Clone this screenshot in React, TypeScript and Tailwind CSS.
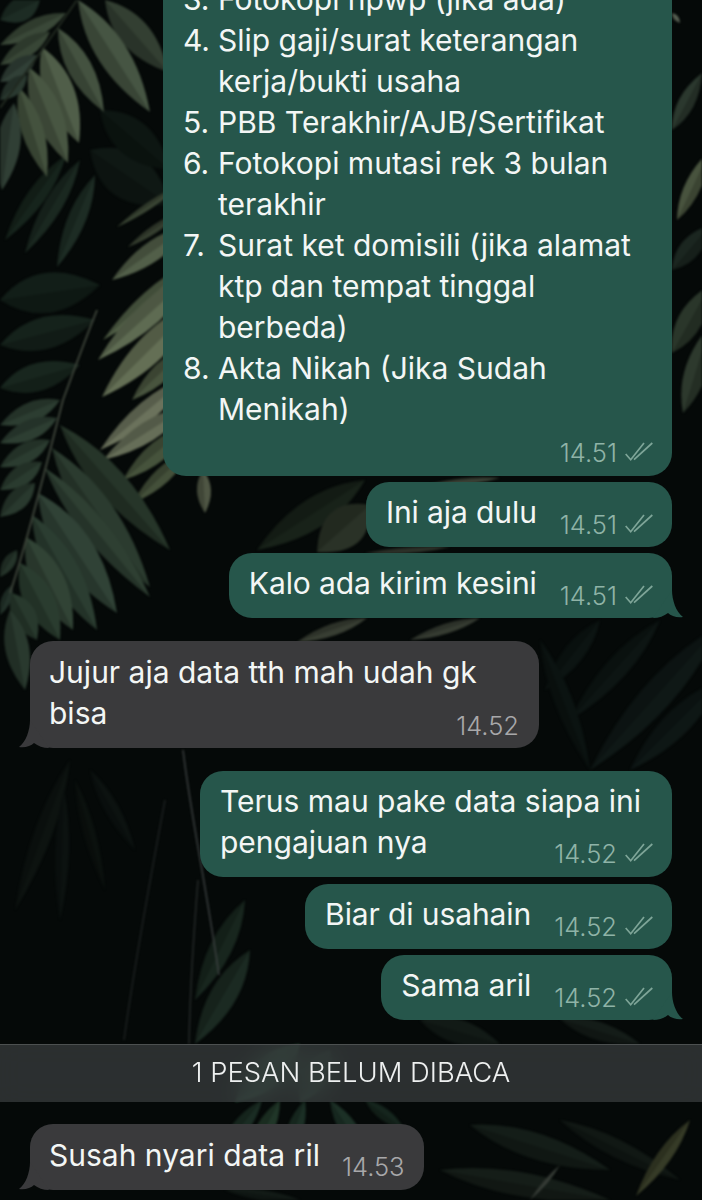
type LeafData = [number, number, number, number, number, string];

const leaves: LeafData[] = [
  // far dark fronds first
  [95, 175, 57, 267, 18, "#1d2c24"],
  [80, 160, 25, 253, 18, "#1a2820"],
  [66, 155, 5, 240, 18, "#16241c"],
  [90, 150, 170, 205, 46, "#0f1814"],
  [100, 110, 170, 170, 36, "#0d1612"],
  [0, 300, 100, 285, 40, "#121e18"],
  [0, 345, 95, 320, 32, "#15221b"],
  [0, 388, 80, 365, 28, "#18261e"],
  [180, 185, 117, 227, 7, "#3a4534"],
  [180, 212, 128, 247, 8, "#363f30"],
  // top left frond
  [105, 0, 168, 72, 30, "#333f32"],
  [78, 0, 150, 112, 30, "#465543"],
  [58, 28, 104, 112, 24, "#445240"],
  [42, 47, 79, 143, 30, "#505e49"],
  [29, 67, 68, 163, 28, "#485642"],
  [19, 87, 47, 177, 22, "#44523e"],
  [14, 103, 2, 190, 24, "#303f35"],
  [66, 13, 0, 45, 18, "#3a4838"],
  [50, 32, 0, 65, 18, "#384636"],
  [37, 55, 0, 82, 18, "#314037"],
  [27, 75, 0, 100, 16, "#2a3930"],
  [40, 0, 0, 20, 24, "#1d2c24"],
  // palm behind first bubble
  [190, 225, 112, 280, 20, "#525f49"],
  [190, 262, 103, 340, 15, "#505e46"],
  [200, 268, 98, 360, 24, "#5e6b52"],
  [200, 300, 102, 397, 28, "#646f55"],
  [190, 345, 132, 400, 18, "#48543e"],
  [190, 375, 100, 450, 20, "#6b725c"],
  [190, 405, 103, 460, 20, "#666e58"],
  [190, 425, 123, 480, 20, "#46533c"],
  [190, 450, 133, 503, 16, "#44503a"],
  [203, 470, 205, 513, 14, "#4f5644"],
  // middle left frond
  [60, 400, 0, 425, 20, "#2c3d31"],
  [57, 418, 0, 443, 20, "#2d3e32"],
  [50, 440, 0, 467, 20, "#2b3c30"],
  [42, 462, 0, 490, 20, "#2a3b2f"],
  [35, 483, 0, 517, 20, "#29392e"],
  [17, 550, 0, 577, 12, "#25342a"],
  [12, 585, 0, 615, 10, "#23322a"],
  [60, 425, 170, 550, 30, "#263529"],
  [52, 448, 150, 587, 32, "#2b3b2f"],
  [45, 468, 150, 597, 24, "#2e3f32"],
  [38, 493, 117, 613, 36, "#304236"],
  [32, 515, 97, 630, 30, "#2b3d31"],
  [26, 537, 73, 630, 32, "#314335"],
  [20, 563, 60, 640, 30, "#2a3c2f"],
  [12, 593, 37, 640, 24, "#28392d"],
  [10, 610, 25, 690, 24, "#29392e"],
  // right edge
  [672, 13, 680, 23, 5, "#5d6658"],
  [672, 130, 702, 73, 16, "#2b382e"],
  [677, 220, 710, 150, 16, "#48533e"],
  [672, 270, 710, 225, 20, "#1b2620"],
  [672, 353, 710, 285, 24, "#2a362a"],
  [683, 413, 710, 325, 22, "#2d392d"],
  // behind the short bubbles
  [365, 480, 257, 550, 30, "#182219"],
  [370, 505, 317, 552, 40, "#2a3227"],
  [367, 618, 297, 642, 12, "#383e33"],
  [480, 618, 410, 640, 10, "#363c32"],
  [500, 478, 430, 484, 6, "#3d4438"],
  [450, 547, 365, 553, 6, "#2f342b"],
  // dim fronds right of grey bubble
  [720, 625, 590, 770, 30, "#0f1816"],
  [720, 680, 630, 770, 26, "#0e1715"],
  [660, 620, 570, 720, 22, "#0d1513"],
  [600, 620, 545, 690, 20, "#0c1412"],
  [540, 640, 590, 770, 18, "#0b1311"],
  // lower left, barely visible
  [70, 760, 15, 910, 18, "#0d1310"],
  [64, 790, 60, 920, 14, "#0c1210"],
  [90, 770, 135, 850, 14, "#0c1210"],
  [75, 780, 105, 890, 12, "#0b110e"],
  [245, 900, 195, 1000, 22, "#18261e"],
  [250, 950, 195, 1044, 26, "#1b2a22"],
  // band under the unread divider and bottom
  [420, 1020, 500, 1044, 24, "#121a16"],
  [560, 1019, 640, 1044, 18, "#141c18"],
  [300, 1044, 235, 1102, 30, "#2e5a40"],
  [330, 1050, 300, 1102, 26, "#2a5039"],
  [262, 1100, 216, 1158, 16, "#1a2c23"],
  [280, 1100, 245, 1168, 18, "#203628"],
  [305, 1100, 283, 1165, 16, "#1b2f25"],
  [330, 1100, 372, 1165, 18, "#1c3026"],
  [365, 1100, 405, 1130, 12, "#15251d"],
  [470, 1125, 610, 1170, 26, "#141d18"],
  [440, 1170, 610, 1200, 24, "#151d18"],
  [560, 1120, 680, 1180, 18, "#111814"],
  [690, 1120, 636, 1196, 14, "#363b27"],
  [560, 1165, 530, 1200, 4, "#3a403a"],
  [225, 1190, 300, 1200, 10, "#121a16"],
];

const control = ([x1, y1, x2, y2, w]: LeafData, sign: number) => {
  const dx = x2 - x1;
  const dy = y2 - y1;
  const len = Math.hypot(dx, dy) || 1;
  return `${x1 + dx * 0.45 + (-dy / len) * w * sign} ${y1 + dy * 0.45 + (dx / len) * w * sign}`;
};

const leafPath = (l: LeafData) =>
  `M${l[0]} ${l[1]} Q${control(l, 1)} ${l[2]} ${l[3]} Q${control(l, -1)} ${l[0]} ${l[1]}Z`;

// darker half of the leaf, gives the fold along the midrib
const shadePath = (l: LeafData) => `M${l[0]} ${l[1]} Q${control(l, 1)} ${l[2]} ${l[3]}Z`;

const Backdrop = () => (
  <svg className="absolute inset-0 blur-[1px]" width="702" height="1200" viewBox="0 0 702 1200" fill="none">
    {leaves.map((l, i) => (
      <g key={i}>
        <path d={leafPath(l)} fill={l[5]} />
        <path d={shadePath(l)} fill="#000000" fillOpacity="0.18" />
      </g>
    ))}
    {/* stems */}
    <path d="M77 0 C60 25 35 60 0 108" stroke="#20281f" strokeWidth="2" />
    <path d="M97 310 C85 340 74 370 63 400 C45 470 28 540 10 593" stroke="#3b4238" strokeWidth="2" />
    <path d="M183 750 C190 810 205 880 219 975" stroke="#3c4040" strokeWidth="1.5" />
    <path d="M165 800 C150 880 135 960 124 1040" stroke="#1d2120" strokeWidth="1.5" />
    <path d="M198 880 C194 930 190 990 189 1044" stroke="#262a29" strokeWidth="1.5" />
  </svg>
);

const Ticks = () => (
  <svg className="ml-[7px] w-[30px] h-[20px]" viewBox="0 0 30 20" fill="none" stroke="#7ea598" strokeWidth="1.7">
    <path d="M1.7 12 L6.7 17.7 L20 1" />
    <path d="M10 17.7 L28.3 1" />
  </svg>
);

const Meta = ({ time, own = true }: { time: string; own?: boolean }) => (
  <div className={own ? "flex items-center h-[26px] text-[25.5px] font-light text-[#8fb3a7]" : "flex items-center h-[26px] text-[25.5px] font-light text-[#a8a8aa]"}>
    <span>{time}</span>
    {own && <Ticks />}
  </div>
);

const Tail = ({ side }: { side: "left" | "right" }) => (
  <svg
    className={side === "right" ? "absolute right-[-11px] bottom-0 w-[30px] h-[28px]" : "absolute left-[-11px] bottom-0 w-[30px] h-[28px] -scale-x-100"}
    viewBox="0 0 30 28"
    fill={side === "right" ? "#26564b" : "#3a3a3c"}
  >
    <path d="M19 0 C19 10 23 22 30 27 C24 28 18 26 15 23 C11 26 6 28 0 28 Z" />
  </svg>
);

// one line bubble, text with the time sitting a little lower
const Short = ({ text, time, tail, className }: { text: string; time: string; tail?: boolean; className: string }) => (
  <div className={`relative self-end flex h-[65px] rounded-[23px] bg-[#26564b] pl-[20px] pr-[18px] pt-[10px] ${className}`}>
    <span className="whitespace-nowrap tracking-[-0.1px]">{text}</span>
    <div className="ml-[23px] mt-[19px]">
      <Meta time={time} />
    </div>
    {tail && <Tail side="right" />}
  </div>
);

const items: [string, string[]][] = [
  ["3.", ["Fotokopi npwp (jika ada)"]],
  ["4.", ["Slip gaji/surat keterangan", "kerja/bukti usaha"]],
  ["5.", ["PBB Terakhir/AJB/Sertifikat"]],
  ["6.", ["Fotokopi mutasi rek 3 bulan", "terakhir"]],
  ["7.", ["Surat ket domisili (jika alamat", "ktp dan tempat tinggal", "berbeda)"]],
  ["8.", ["Akta Nikah (Jika Sudah", "Menikah)"]],
];

export default function App() {
  return (
    <div className="relative w-[702px] h-[1200px] overflow-hidden bg-[#050908] text-[30px] leading-[41px] text-[#f3f6f5] font-['Inter',sans-serif]">
      <Backdrop />
      <div className="relative flex flex-col -mt-[31px] pr-[30px]">
        <div className="self-end w-[509px] h-[507px] rounded-[23px] bg-[#26564b] pl-[20px] pr-[18px] pt-[10px]">
          {items.map(([n, lines]) => (
            <div key={n} className="flex">
              <span className="w-[35px] shrink-0">{n}</span>
              <div className="whitespace-nowrap">
                {lines.map((l) => (
                  <div key={l}>{l}</div>
                ))}
              </div>
            </div>
          ))}
          <div className="flex justify-end mt-[9px]">
            <Meta time="14.51" />
          </div>
        </div>

        <Short className="mt-[6px]" text="Ini aja dulu" time="14.51" />
        <Short className="mt-[6px]" text="Kalo ada kirim kesini" time="14.51" tail />

        <div className="relative self-start ml-[30px] mt-[23px] w-[509px] h-[107px] rounded-[23px] bg-[#3a3a3c] pl-[19px] pr-[20px] pt-[11px]">
          <div>Jujur aja data tth mah udah gk</div>
          <div>bisa</div>
          <div className="flex justify-end -mt-[22px]">
            <Meta time="14.52" own={false} />
          </div>
          <Tail side="left" />
        </div>

        <div className="self-end mt-[23px] w-[472px] h-[106px] rounded-[23px] bg-[#26564b] pl-[20px] pr-[18px] pt-[10px]">
          <div>Terus mau pake data siapa ini</div>
          <div>pengajuan nya</div>
          <div className="flex justify-end -mt-[23px]">
            <Meta time="14.52" />
          </div>
        </div>

        <Short className="mt-[7px]" text="Biar di usahain" time="14.52" />
        <Short className="mt-[6px]" text="Sama aril" time="14.52" tail />
      </div>

      <div className="relative mt-[24px] flex h-[58px] items-center justify-center border-t border-[#4c5050] bg-[#383c3e]/75 pb-[3px] backdrop-blur-md text-[27.4px] font-light text-[#eef0f0]">
        1 PESAN BELUM DIBACA
      </div>

      <div className="relative ml-[30px] mt-[22px] flex w-fit h-[66px] rounded-[23px] bg-[#3a3a3c] pl-[19px] pr-[19px] pt-[11px]">
        <span className="whitespace-nowrap">Susah nyari data ril</span>
        <div className="ml-[22px] mt-[18px]">
          <Meta time="14.53" own={false} />
        </div>
        <Tail side="left" />
      </div>
    </div>
  );
}
